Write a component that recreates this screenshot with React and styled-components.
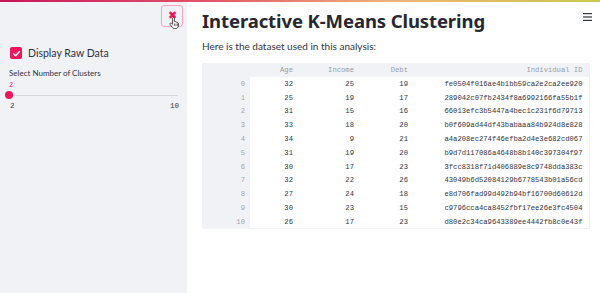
import React from "react";
import styled, { createGlobalStyle } from "styled-components";

const Global = createGlobalStyle`
  html, body { margin: 0; padding: 0; background: #ffffff; }
  body { font-family: Lato, "Noto Sans", sans-serif; color: #262730; overflow: hidden; }
  * { box-sizing: border-box; }
`;

const Decoration = styled.div`
  position: fixed;
  top: 0;
  left: 0;
  right: 0;
  height: 2px;
  background: linear-gradient(90deg, #c8145a 0%, #e2556a 35%, #f0b27a 65%, #c9c84a 100%);
  z-index: 5;
`;

const Page = styled.div`
  display: flex;
  width: 600px;
  height: 293px;
`;

const Sidebar = styled.aside`
  width: 187px;
  flex: none;
  background: #f0f2f6;
  display: flex;
  flex-direction: column;
  padding: 5px 4px 0 9px;
`;

const CloseRow = styled.div`
  display: flex;
  justify-content: flex-end;
`;

const CloseButton = styled.button`
  position: relative;
  width: 22px;
  height: 22px;
  border: 1px solid #f4a3c0;
  border-radius: 3px;
  background: transparent;
  padding: 0;
  display: flex;
  align-items: flex-start;
  justify-content: center;
  padding-top: 4px;
  color: #f0145a;
  font-size: 11px;
  line-height: 1;
`;

const Cursor = styled.svg`
  position: absolute;
  left: 7px;
  top: 10px;
`;

const CheckRow = styled.label`
  display: flex;
  align-items: center;
  gap: 6px;
  margin-top: 20px;
  margin-left: 1px;
  font-family: Lato, sans-serif;
  font-size: 10.5px;
  color: #31333f;
`;

const CheckBox = styled.span`
  width: 12px;
  height: 12px;
  border-radius: 2px;
  background: #f0145a;
  display: flex;
  align-items: center;
  justify-content: center;
`;

const SliderLabel = styled.div`
  margin-top: 9px;
  font-family: Lato, sans-serif;
  font-size: 8px;
  color: #31333f;
`;

const SliderValue = styled.div`
  margin-top: 3px;
  font-family: "Liberation Mono", monospace;
  font-size: 7px;
  color: #f0145a;
  line-height: 8px;
`;

const Track = styled.div`
  position: relative;
  margin-top: 3px;
  height: 6px;
  display: flex;
  align-items: center;
  margin-right: 5px;
`;

const TrackLine = styled.div`
  flex: 1;
  height: 1px;
  background: #d5d7dc;
`;

const Thumb = styled.div`
  position: absolute;
  left: -4px;
  top: -1px;
  width: 8px;
  height: 8px;
  border-radius: 50%;
  background: #f0145a;
`;

const Ticks = styled.div`
  display: flex;
  justify-content: space-between;
  margin-top: 4px;
  margin-right: 4px;
  margin-left: 1px;
  font-family: "Liberation Mono", monospace;
  font-size: 7.5px;
  color: #31333f;
`;

const Main = styled.main`
  flex: 1;
  padding: 8px 8px 0 15px;
  display: flex;
  flex-direction: column;
`;

const TitleRow = styled.div`
  display: flex;
  justify-content: space-between;
  align-items: flex-start;
`;

const Title = styled.h1`
  margin: 0;
  font-family: "Noto Sans", sans-serif;
  font-weight: 700;
  font-size: 18.5px;
  line-height: 26px;
  color: #262730;
  letter-spacing: -0.1px;
`;

const Menu = styled.svg`
  margin-top: 5px;
`;

const Subtitle = styled.p`
  margin: 6px 0 0 0;
  font-family: Lato, sans-serif;
  font-size: 10px;
  color: #31333f;
`;

const Table = styled.table`
  margin-top: 11px;
  border-collapse: collapse;
  width: 387px;
  table-layout: fixed;
  font-family: "Liberation Mono", monospace;
  font-size: 7.2px;
  border-right: 1px solid #f0f2f6;
  border-bottom: 1px solid #f0f2f6;
`;

const HeadCell = styled.th`
  background: #f0f2f6;
  color: #9a9ca6;
  font-weight: 400;
  text-align: right;
  height: 14px;
  padding: 0 ${(p) => p.$pr || 4}px 0 4px;
  width: ${(p) => p.$w}px;
`;

const IndexCell = styled.td`
  background: #f0f2f6;
  color: #a3a5ad;
  text-align: right;
  padding: 0 5px;
  height: 13.8px;
`;

const Cell = styled.td`
  color: #31333f;
  text-align: right;
  padding: 0 ${(p) => p.$pr || 4}px 0 4px;
  height: 13.8px;
  white-space: nowrap;
  overflow: hidden;
`;

const rows = [
  [32, 25, 19, "fe0504f016ae4b1bb59ca2e2ca2ee920"],
  [25, 19, 17, "289042c07fb2434f8a6992166fa55b1f"],
  [31, 15, 16, "66013efc3b5447a4bec1c231f6d79713"],
  [33, 18, 20, "b0f609ad44df43babaaa84b924d8e828"],
  [34, 9, 21, "a4a208ec274f46efba2d4e3e682cd067"],
  [31, 19, 20, "b9d7d117086a4648b8b140c397304f97"],
  [30, 17, 23, "3fcc8318f71d406889e8c9748dda383c"],
  [32, 22, 26, "43049b6d52084129b6778543b01a56cd"],
  [27, 24, 18, "e8d706fad99d492b94bf16700d60612d"],
  [30, 23, 15, "c9796cca4ca8452fbf17ee26e3fc4504"],
  [26, 17, 23, "d80e2c34ca9643389ee4442fb8c0e43f"],
];

export default function App() {
  return (
    <>
      <Global />
      <Decoration />
      <Page>
        <Sidebar>
          <CloseRow>
            <CloseButton aria-label="close">
              <span>✖</span>
              <Cursor width="12" height="13" viewBox="0 0 24 26">
                <path
                  d="M9 2.5c1 0 1.8.8 1.8 1.8V11l1-.2c.9 0 1.6.5 1.8 1.3l.9-.1c.9 0 1.6.6 1.8 1.4l.8-.1c1 0 1.8.8 1.8 1.8v4.5c0 3-2.4 5.4-5.4 5.4h-2.6c-1.8 0-3.4-.9-4.4-2.3L2.2 16.6c-.5-.8-.3-1.8.5-2.3.7-.4 1.6-.3 2.2.3l2.3 2.3V4.3C7.2 3.3 8 2.5 9 2.5z"
                  fill="#ffffff"
                  stroke="#222"
                  strokeWidth="1.6"
                  strokeLinejoin="round"
                />
                <path d="M11 15v5M14 15v5M17 15v5" stroke="#222" strokeWidth="1.2" />
              </Cursor>
            </CloseButton>
          </CloseRow>
          <CheckRow>
            <CheckBox>
              <svg width="9" height="9" viewBox="0 0 10 10">
                <path d="M1.8 5.2l2.2 2.2 4.3-4.6" fill="none" stroke="#fff" strokeWidth="1.6" strokeLinecap="round" strokeLinejoin="round" />
              </svg>
            </CheckBox>
            Display Raw Data
          </CheckRow>
          <SliderLabel>Select Number of Clusters</SliderLabel>
          <SliderValue>2</SliderValue>
          <Track>
            <TrackLine />
            <Thumb />
          </Track>
          <Ticks>
            <span>2</span>
            <span>10</span>
          </Ticks>
        </Sidebar>
        <Main>
          <TitleRow>
            <Title>Interactive K-Means Clustering</Title>
            <Menu width="9" height="8" viewBox="0 0 9 8">
              <rect x="0" y="0" width="9" height="1.2" fill="#31333f" />
              <rect x="0" y="3.4" width="9" height="1.2" fill="#31333f" />
              <rect x="0" y="6.8" width="9" height="1.2" fill="#31333f" />
            </Menu>
          </TitleRow>
          <Subtitle>Here is the dataset used in this analysis:</Subtitle>
          <Table>
            <thead>
              <tr>
                <HeadCell $w={48}></HeadCell>
                <HeadCell $w={47}>Age</HeadCell>
                <HeadCell $w={61}>Income</HeadCell>
                <HeadCell $w={54}>Debt</HeadCell>
                <HeadCell $w={177} $pr={6}>Individual ID</HeadCell>
              </tr>
            </thead>
            <tbody>
              {rows.map((r, i) => (
                <tr key={i}>
                  <IndexCell>{i}</IndexCell>
                  <Cell>{r[0]}</Cell>
                  <Cell>{r[1]}</Cell>
                  <Cell>{r[2]}</Cell>
                  <Cell $pr={6}>{r[3]}</Cell>
                </tr>
              ))}
            </tbody>
          </Table>
        </Main>
      </Page>
    </>
  );
}
